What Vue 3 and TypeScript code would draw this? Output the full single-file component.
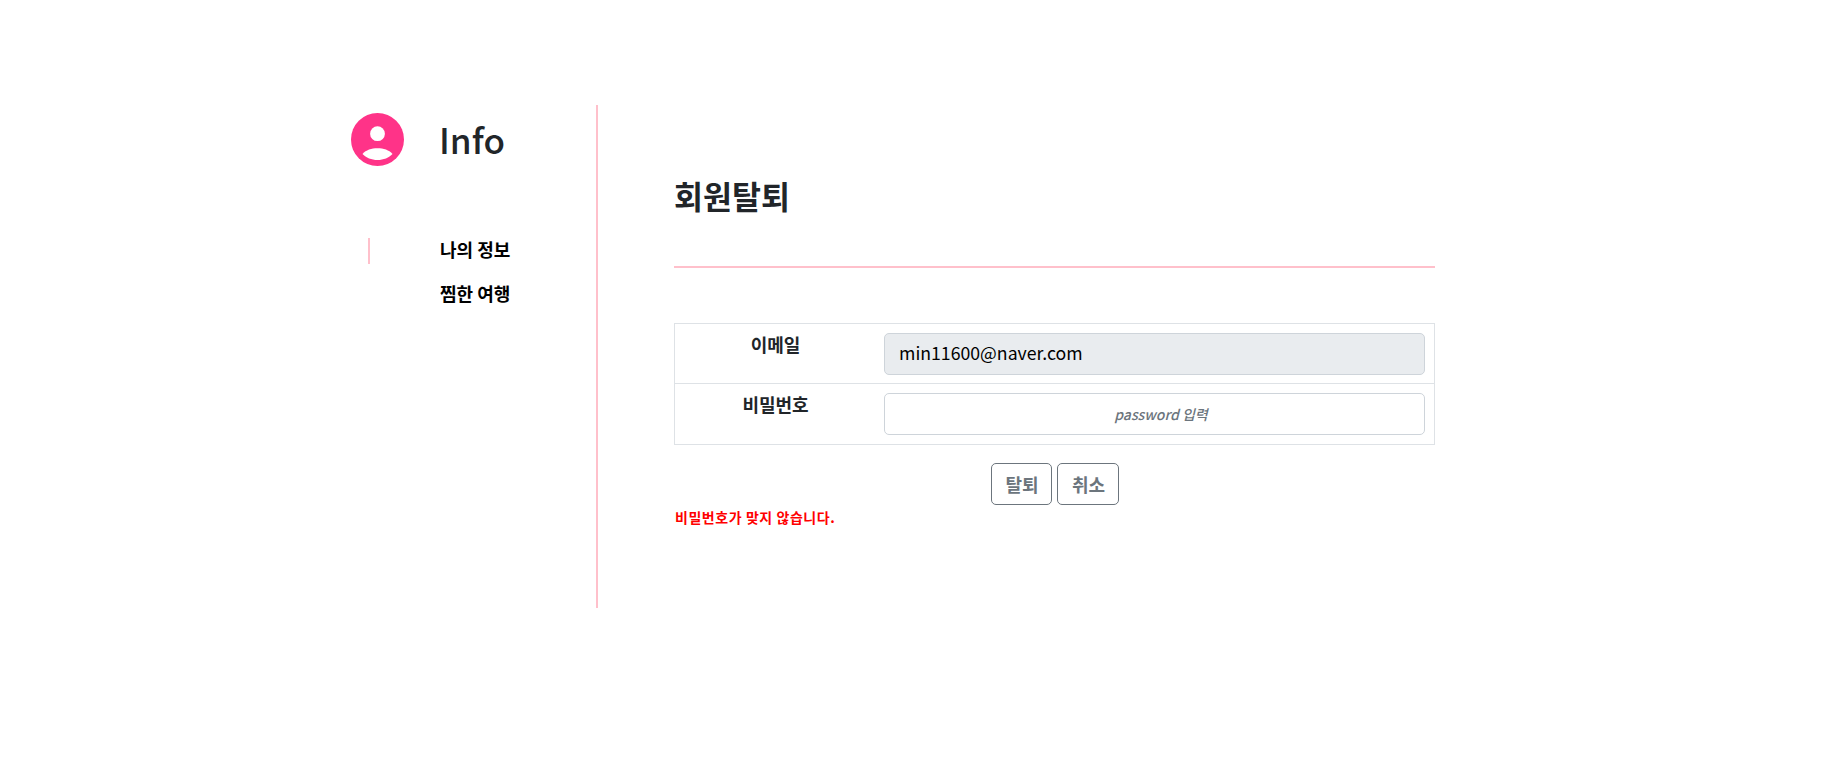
<script setup lang="ts">
const menu: string[] = ['나의 정보', '찜한 여행']
</script>

<template>
  <div class="page">
    <aside class="side">
      <div class="brand">
        <svg class="avatar" viewBox="0 0 53 53" width="53" height="53">
          <circle cx="26.5" cy="26.5" r="26.5" fill="#ff3388" />
          <circle cx="26.5" cy="20.7" r="7.4" fill="#fff" />
          <path d="M11.5 41C15 37 20.5 35.3 26.5 35.3C32.5 35.3 38 37 41.5 41C38 44.8 32.5 47 26.5 47C20.5 47 15 44.8 11.5 41Z" fill="#fff" />
        </svg>
        <h1 class="brand-title">Info</h1>
      </div>
      <ul class="menu">
        <li v-for="(m, i) in menu" :key="m" class="menu-item" :class="{ active: i === 0 }">{{ m }}</li>
      </ul>
    </aside>
    <main class="main">
      <h2 class="title">회원탈퇴</h2>
      <hr class="rule" />
      <table class="form">
        <tbody>
          <tr>
            <th>이메일</th>
            <td><input class="field readonly" value="min11600@naver.com" readonly /></td>
          </tr>
          <tr class="last">
            <th>비밀번호</th>
            <td><input class="field pass" type="password" placeholder="password 입력" /></td>
          </tr>
        </tbody>
      </table>
      <div class="actions">
        <button class="btn" type="button">탈퇴</button>
        <button class="btn" type="button">취소</button>
      </div>
      <p class="error">비밀번호가 맞지 않습니다.</p>
    </main>
  </div>
</template>

<style>
html, body { margin: 0; background: #fff; }
</style>

<style scoped>
.page {
  display: flex;
  box-sizing: border-box;
  height: 784px;
  padding: 105px 0 0 351px;
  font-family: "Noto Sans CJK KR", "Noto Sans", sans-serif;
  color: #212529;
}
.side {
  box-sizing: border-box;
  width: 247px;
  height: 503px;
  border-right: 2px solid #ffc0cb;
}
.brand {
  display: flex;
  align-items: center;
  gap: 35px;
  margin-top: 7px;
  height: 54px;
}
.avatar { display: block; flex: none; }
.brand-title {
  margin: 0;
  font-size: 35px;
  font-weight: 500;
  line-height: 54px;
}
.menu {
  list-style: none;
  margin: 72px 0 0;
  padding: 0;
}
.menu-item {
  box-sizing: border-box;
  height: 26px;
  margin: 0 0 18px 17px;
  padding-left: 70px;
  font-size: 18px;
  font-weight: 700;
  line-height: 22px;
  color: #000;
  border-left: 2px solid transparent;
}
.menu-item.active { border-left-color: #ffc0cb; }
.main {
  width: 761px;
  margin-left: 76px;
}
.title {
  margin: 70px 0 0;
  font-size: 31.5px;
  font-weight: 700;
  line-height: 40px;
}
.rule {
  margin: 51px 0 0;
  border: 0;
  height: 2px;
  background: #ffc0cb;
}
.form {
  width: 761px;
  margin-top: 55px;
  border-collapse: collapse;
}
.form th, .form td {
  border: 1px solid #dee2e6;
  padding: 9px 9px 8px 8px;
  vertical-align: top;
}
.form .last td { padding-bottom: 9px; }
.form th {
  width: 185px;
  padding-top: 7px;
  padding-right: 8px;
  border-right: 0;
  font-size: 18px;
  font-weight: 700;
  line-height: 27px;
  text-align: center;
}
.form td { border-left: 0; }
.field {
  display: block;
  box-sizing: border-box;
  width: 100%;
  height: 42px;
  padding: 4px 14px 8px;
  border: 1px solid #ced4da;
  border-radius: 5px;
  background: #fff;
  font-family: inherit;
  font-size: 17.7px;
  color: #000;
  outline: none;
}
.readonly { background: #e9ecef; }
.pass { text-align: center; padding: 3px 14px 7px 27px; }
.pass::placeholder {
  color: #6c757d;
  font-style: italic;
  font-size: 14px;
  font-weight: 500;
}
.actions {
  display: flex;
  justify-content: center;
  gap: 5px;
  margin-top: 18px;
}
.btn {
  box-sizing: border-box;
  width: 62px;
  height: 42px;
  padding: 0 0 0 2px;
  border: 1px solid #6c757d;
  border-radius: 5px;
  background: #fff;
  color: #6c757d;
  font-family: inherit;
  font-size: 18px;
  font-weight: 700;
}
.btn:first-child { width: 61px; }
.error {
  margin: 2px 0 0;
  padding-left: 1px;
  font-size: 14px;
  font-weight: 700;
  line-height: 21px;
  letter-spacing: 0.55px;
  color: #f00;
}
</style>
